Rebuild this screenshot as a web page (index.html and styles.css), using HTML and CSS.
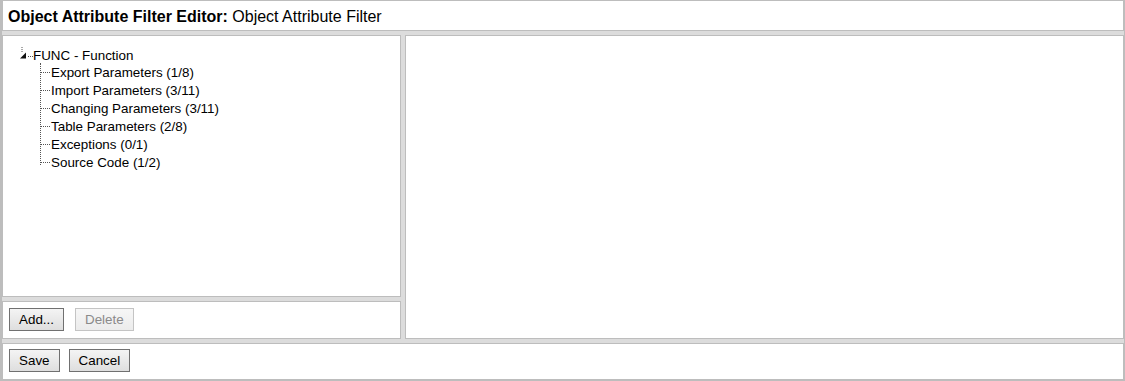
FILE: index.html
```html
<!DOCTYPE html>
<html lang="en">
<head>
  <meta charset="UTF-8">
  <title>Object Attribute Filter Editor</title>
  <link rel="stylesheet" href="styles.css">
</head>
<body>
  <div class="editor">
    <div class="header panel">
      <span class="title">Object Attribute Filter Editor:</span> Object Attribute Filter
    </div>
    <div class="main">
      <div class="left">
        <div class="tree panel">
          <div class="root">
            <svg class="toggle" width="10" height="12" viewBox="0 0 10 12">
              <path d="M4 0v1M4 2v1M4 4v1" stroke="#555" stroke-width="1"/>
              <path d="M8 5.5L8 11.5L2 11.5Z" fill="#111"/>
            </svg>
            <span class="dots"></span>FUNC - Function
          </div>
          <ul class="children">
            <li>Export Parameters (1/8)</li>
            <li>Import Parameters (3/11)</li>
            <li>Changing Parameters (3/11)</li>
            <li>Table Parameters (2/8)</li>
            <li>Exceptions (0/1)</li>
            <li>Source Code (1/2)</li>
          </ul>
        </div>
        <div class="actions panel">
          <button class="btn">Add...</button>
          <button class="btn" disabled>Delete</button>
        </div>
      </div>
      <div class="detail panel"></div>
    </div>
    <div class="footer panel">
      <button class="btn">Save</button>
      <button class="btn">Cancel</button>
    </div>
  </div>
</body>
</html>
```

FILE: styles.css
```css
body {
  margin: 0;
  font-family: "Liberation Sans", Arial, sans-serif;
  background: #fff;
}

.editor {
  height: 381px;
  box-sizing: border-box;
  display: flex;
  flex-direction: column;
  gap: 4px;
  background: #dcdcdc;
  border-left: 2px solid #bdbdbd;
  border-right: 1px solid #bdbdbd;
  border-bottom: 1px solid #bdbdbd;
}

.panel {
  background: #fff;
  border: 1px solid #bdbdbd;
  box-sizing: border-box;
}

.header {
  height: 31px;
  padding: 7px 0 0 5px;
  font-size: 16px;
  color: #000;
}

.title {
  font-weight: bold;
}

.main {
  display: flex;
  gap: 4px;
  height: 304px;
}

.left {
  width: 399px;
  display: flex;
  flex-direction: column;
  gap: 4px;
}

.tree {
  flex: 1;
  padding: 10px 0 0 15px;
  font-size: 13.4px;
  color: #000;
}

.root {
  display: flex;
  align-items: center;
  height: 18px;
}

.toggle {
  display: block;
  margin-top: -4px;
}

.dots {
  width: 5px;
  border-top: 1px dotted #555;
  margin: 3px 0 0 0;
}

.children {
  list-style: none;
  margin: -3px 0 0 22px;
  padding: 0;
  border-left: 1px dotted #555;
  height: 102px;
}

.children li {
  display: flex;
  align-items: center;
  height: 18px;
}

.children li:first-child {
  margin-top: 2px;
}

.children li::before {
  content: "";
  width: 9px;
  margin-right: 1px;
  border-top: 1px dotted #555;
}

.actions {
  height: 38px;
  padding: 6px 0 0 6px;
  display: flex;
  gap: 11px;
  align-items: flex-start;
}

.detail {
  flex: 1;
}

.footer {
  height: 37px;
  padding: 5px 0 0 6px;
  display: flex;
  gap: 9px;
  align-items: flex-start;
}

.btn {
  font-family: "Liberation Sans", Arial, sans-serif;
  font-size: 13.4px;
  height: 23px;
  padding: 0 9px;
  color: #000;
  background: linear-gradient(#f4f4f4, #dedede);
  border: 1px solid #707070;
  border-radius: 0;
}

.btn:disabled {
  color: #8a8a8a;
  border-color: #c4c4c4;
  background: linear-gradient(#f6f6f6, #ececec);
}
```
